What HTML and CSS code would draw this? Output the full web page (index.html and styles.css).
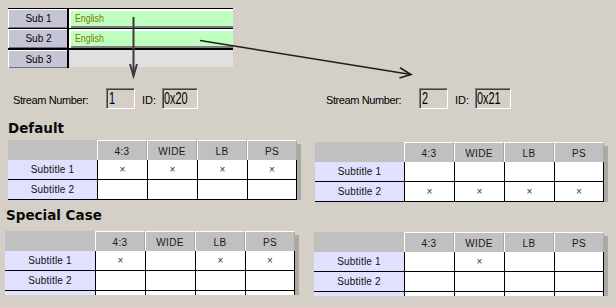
FILE: index.html
```html
<!DOCTYPE html>
<html>
<head>
<meta charset="utf-8">
<link rel="stylesheet" href="styles.css">
</head>
<body>
<div class="page">
  <svg class="arrows" width="616" height="307" viewBox="0 0 616 307">
    <line x1="133.5" y1="17" x2="133.5" y2="76" stroke="#3a3a3a" stroke-width="2"/>
    <polyline points="130,64 133.5,76 137,64" fill="none" stroke="#3a3a3a" stroke-width="2"/>
    <line x1="200" y1="40.5" x2="411" y2="74.5" stroke="#1e1e1e" stroke-width="1.6"/>
    <polyline points="400,67.8 411,74.5 399.5,78" fill="none" stroke="#1e1e1e" stroke-width="1.6"/>
  </svg>

  <div class="subs">
    <div class="sub-row">
      <div class="sub-label">Sub 1</div>
      <div class="sub-value on"><span class="narrow">English</span></div>
    </div>
    <div class="sub-row">
      <div class="sub-label">Sub 2</div>
      <div class="sub-value on"><span class="narrow">English</span></div>
    </div>
    <div class="sub-row last">
      <div class="sub-label">Sub 3</div>
      <div class="sub-value off"></div>
    </div>
  </div>

  <div class="streams">
    <div class="stream">
      <span class="stream-label">Stream Number:</span>
      <span class="field f-num"><span class="field-text">1</span></span>
      <span class="id-label">ID:</span>
      <span class="field f-id"><span class="field-text">0x20</span></span>
    </div>
    <div class="stream">
      <span class="stream-label">Stream Number:</span>
      <span class="field f-num"><span class="field-text">2</span></span>
      <span class="id-label">ID:</span>
      <span class="field f-id"><span class="field-text">0x21</span></span>
    </div>
  </div>

  <h2 class="heading h-default">Default</h2>
  <div class="tables t-default">
    <div class="tbl">
      <div class="hcorner"></div><div class="hcell">4:3</div><div class="hcell">WIDE</div><div class="hcell">LB</div><div class="hcell">PS</div><div class="hshadow"></div>
      <div class="rlabel">Subtitle 1</div><div class="cell">×</div><div class="cell">×</div><div class="cell">×</div><div class="cell last">×</div><div class="shadow"></div>
      <div class="rlabel">Subtitle 2</div><div class="cell"></div><div class="cell"></div><div class="cell"></div><div class="cell last"></div><div class="shadow"></div>
    </div>
    <div class="tbl right">
      <div class="hcorner"></div><div class="hcell">4:3</div><div class="hcell">WIDE</div><div class="hcell">LB</div><div class="hcell">PS</div><div class="hshadow"></div>
      <div class="rlabel">Subtitle 1</div><div class="cell"></div><div class="cell"></div><div class="cell"></div><div class="cell last"></div><div class="shadow"></div>
      <div class="rlabel">Subtitle 2</div><div class="cell">×</div><div class="cell">×</div><div class="cell">×</div><div class="cell last">×</div><div class="shadow"></div>
    </div>
  </div>

  <h2 class="heading h-special">Special Case</h2>
  <div class="tables t-special">
    <div class="tbl wide-label stubbed">
      <div class="hcorner"></div><div class="hcell">4:3</div><div class="hcell">WIDE</div><div class="hcell">LB</div><div class="hcell">PS</div><div class="hshadow"></div>
      <div class="rlabel">Subtitle 1</div><div class="cell">×</div><div class="cell"></div><div class="cell">×</div><div class="cell last">×</div><div class="shadow"></div>
      <div class="rlabel">Subtitle 2</div><div class="cell"></div><div class="cell"></div><div class="cell"></div><div class="cell last"></div><div class="shadow"></div>
      <div class="rlabel stub"></div><div class="cell stub"></div><div class="cell stub"></div><div class="cell stub"></div><div class="cell last stub"></div><div class="shadow"></div>
    </div>
    <div class="tbl wide-label stubbed right">
      <div class="hcorner"></div><div class="hcell">4:3</div><div class="hcell">WIDE</div><div class="hcell">LB</div><div class="hcell">PS</div><div class="hshadow"></div>
      <div class="rlabel">Subtitle 1</div><div class="cell"></div><div class="cell">×</div><div class="cell"></div><div class="cell last"></div><div class="shadow"></div>
      <div class="rlabel">Subtitle 2</div><div class="cell"></div><div class="cell"></div><div class="cell"></div><div class="cell last"></div><div class="shadow"></div>
      <div class="rlabel stub"></div><div class="cell stub"></div><div class="cell stub"></div><div class="cell stub"></div><div class="cell last stub"></div><div class="shadow"></div>
    </div>
  </div>
</div>
</body>
</html>
```

FILE: styles.css
```css
html, body {
  margin: 0;
  background: #d4d0c8;
  font-family: "Liberation Sans", Arial, sans-serif;
  overflow: hidden;
}

.page {
  position: relative;
  width: 616px;
  height: 307px;
  padding-top: 8px;
  box-sizing: border-box;
}

.arrows {
  position: absolute;
  top: 0;
  left: 0;
  pointer-events: none;
  z-index: 2;
}

/* subtitle selector */
.subs {
  margin-left: 8px;
  width: 225px;
}

.sub-row {
  display: flex;
  height: 20px;
}

.sub-label {
  width: 61px;
  box-sizing: border-box;
  border-top: 1px solid #000;
  border-right: 2px solid #000;
  background: #c4c4d4;
  box-shadow: inset 1px 1px 0 #fff, inset 0 -1px 0 #6e6e80;
  font-size: 10px;
  color: #000;
  display: flex;
  align-items: center;
  justify-content: center;
  padding-left: 2px;
}

.sub-row.last .sub-label {
  border-top-width: 2px;
}

.sub-value {
  flex: 1;
  box-sizing: border-box;
}

.sub-value.on {
  border-top: 1px solid #000;
  background: #c0ffc0;
  box-shadow: inset 2px 2px 0 #fff, inset 0 -2px 0 #7c7c7c;
  color: #7a7a00;
  font-size: 11px;
  line-height: 18px;
  padding-left: 6px;
}

.narrow {
  display: inline-block;
  transform: scaleX(0.8);
  transform-origin: left center;
}

.sub-value.off {
  border-top: 2px solid #000;
  background: #e0e0e0;
  height: 19px;
}

/* stream numbers */
.streams {
  margin-top: 20px;
  display: grid;
  grid-template-columns: 313px 1fr;
  padding-left: 13px;
}

.stream {
  display: flex;
  align-items: flex-end;
  height: 21px;
}

.stream-label {
  width: 93px;
  font-size: 11px;
  line-height: 13px;
  letter-spacing: -0.4px;
  margin-bottom: 2px;
  color: #000;
}

.id-label {
  width: 20px;
  margin-left: 7px;
  font-size: 11px;
  line-height: 13px;
  margin-bottom: 2px;
  color: #000;
}

.field {
  box-sizing: border-box;
  height: 21px;
  border: 1px solid;
  border-color: #808080 #fff #fff #808080;
  box-shadow: inset 1px 1px 0 #404040;
  padding-left: 2px;
  color: #000;
  overflow: hidden;
}

.field-text {
  display: inline-block;
  font-size: 16px;
  line-height: 19px;
  transform: scaleX(0.68);
  transform-origin: left center;
}

.f-num { width: 29px; }
.f-id { width: 36px; padding-left: 1px; }

/* headings */
.heading {
  margin: 0;
  font-family: "DejaVu Sans", sans-serif;
  font-weight: bold;
  font-size: 13.5px;
  line-height: 16px;
  color: #0a0a0a;
}

.h-default {
  margin-top: 11px;
  padding-left: 8px;
}

.h-special {
  margin-top: 5px;
  padding-left: 6px;
}

/* tables */
.tables {
  display: grid;
  align-items: start;
}

.t-default {
  margin-top: 4px;
  grid-template-columns: 307px auto;
  padding-left: 8px;
}

.t-default .right {
  margin-top: 2px;
}

.t-special {
  margin-top: 8px;
  grid-template-columns: 309px auto;
  padding-left: 5px;
}

.t-special .right {
  margin-top: 1px;
}

.tbl {
  display: grid;
  grid-template-columns: 89px repeat(4, 50px) 4px;
  grid-template-rows: 20px 20px 20px;
  font-size: 10px;
  color: #111;
}

.tbl.wide-label {
  grid-template-columns: 90px repeat(4, 50px) 4px;
}

.tbl.stubbed {
  grid-template-rows: 20px 20px 20px 4px;
}

.tbl > div {
  box-sizing: border-box;
  display: flex;
  align-items: center;
  justify-content: center;
}

.hcorner {
  background: #c0c0c0;
}

.hcell {
  background: #c0c0c0;
  border-top: 1px solid #fff;
  border-left: 1px solid #fff;
  border-right: 1px solid #a8a8a8;
  color: #1a1a1a;
  padding-top: 1px;
  letter-spacing: 0.4px;
}

.hshadow {
  margin-top: 4px;
  background: #aca9a2;
}

.shadow {
  background: #aca9a2;
}

.rlabel {
  background: #e0e0ff;
  border-bottom: 1px solid #000;
  letter-spacing: 0.2px;
}

.cell {
  background: #fff;
  border-left: 1px solid #000;
  border-bottom: 1px solid #000;
  color: #333;
}

.cell.last {
  border-right: 1px solid #000;
}

.stub {
  border-bottom: none;
}
```
